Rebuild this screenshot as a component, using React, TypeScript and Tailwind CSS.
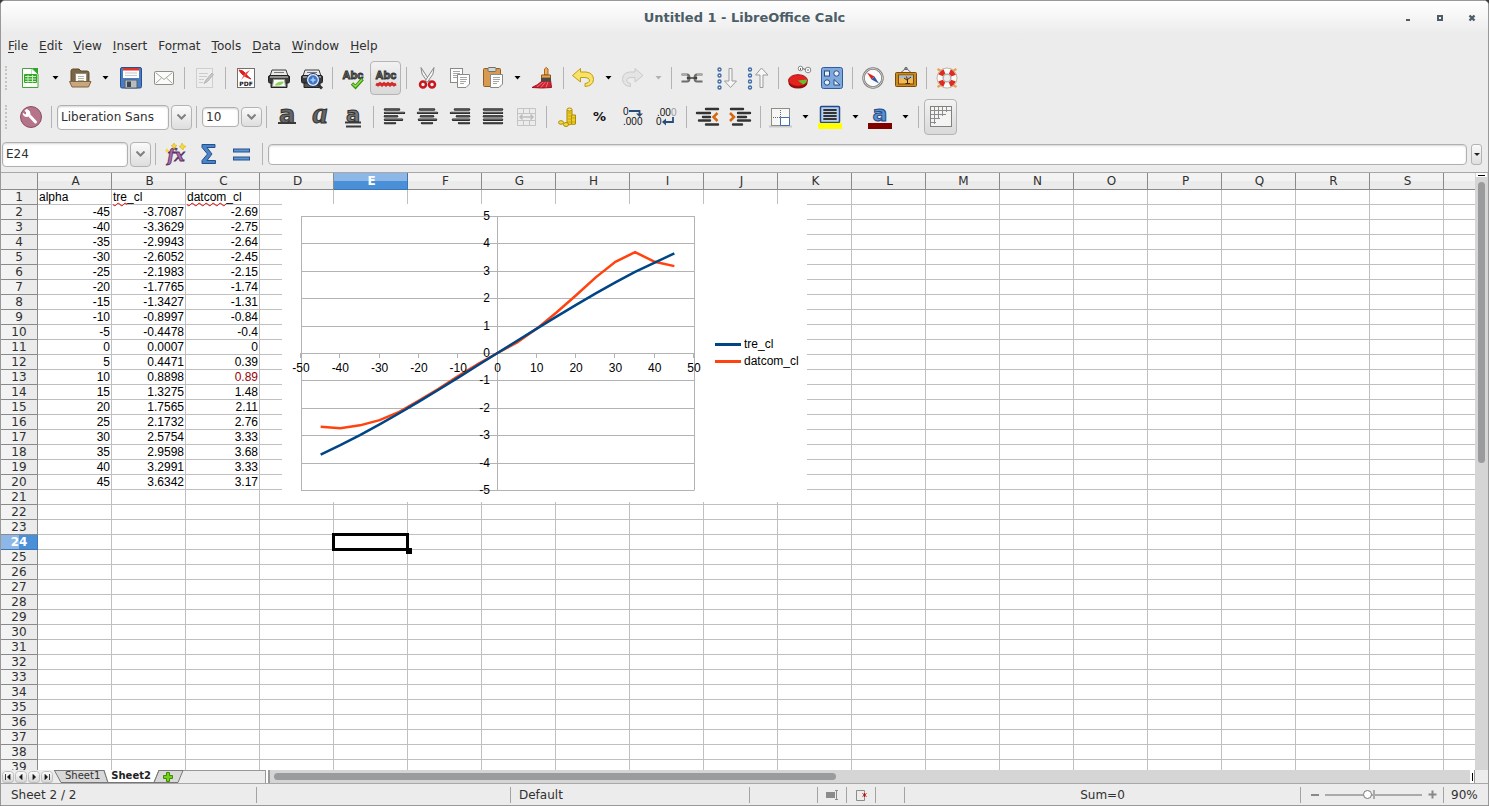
import React, { useState } from "react";
import clsx from "clsx";

const columns = "ABCDEFGHIJKLMNOPQRST".split("");
const rowCount = 39;

const alpha = [-45, -40, -35, -30, -25, -20, -15, -10, -5, 0, 5, 10, 15, 20, 25, 30, 35, 40, 45];
const treCl = [
  -3.7087, -3.3629, -2.9943, -2.6052, -2.1983, -1.7765, -1.3427, -0.8997, -0.4478, 0.0007,
  0.4471, 0.8898, 1.3275, 1.7565, 2.1732, 2.5754, 2.9598, 3.2991, 3.6342,
];
const datcomCl = [
  -2.69, -2.75, -2.64, -2.45, -2.15, -1.74, -1.31, -0.84, -0.4, 0,
  0.39, 0.89, 1.48, 2.11, 2.76, 3.33, 3.68, 3.33, 3.17,
];

const Icon = ({ children }: { children: React.ReactNode }) => (
  <svg width="25" height="24" viewBox="0 0 25 24" fill="none" aria-hidden="true" className="block shrink-0 overflow-visible">
    {children}
  </svg>
);

/* ---------- standard toolbar icons ---------- */

const NewIcon = () => (
  <Icon>
    <path d="M4.5 2.5H14L20 8V21.5H4.5Z" fill="#fff" stroke="#3fa535" />
    <path d="M14 2H20V8Z" fill="#2fa52a" />
    <path d="M13.5 3V8.5H19" stroke="#bfe3bb" />
    <rect x="6" y="8" width="13" height="9" rx="1" fill="#37a52c" />
    <path d="M7 10.5H18M7 13H18M7 15.5H18M10 9V16.500M14.500 9V16.500" stroke="#c9efc2" />
  </Icon>
);

const OpenIcon = () => (
  <Icon>
    <path d="M3 5Q3 3 5 3H11L13 5H19Q21 5 21 7V18H3Z" fill="#7d6444" stroke="#5e4a31" />
    <path d="M7.500 7.500H18.500V18H7.500Z" fill="#fafaf7" stroke="#8b8b80" />
    <path d="M10 10.500H16M10 12.500H16M10 14.500H16" stroke="#b5b5ac" />
    <path d="M1.500 15.500H23L20.500 21H4Z" fill="#c9a77b" stroke="#7d6444" />
  </Icon>
);

const SaveIcon = () => (
  <Icon>
    <rect x="2.500" y="1.500" width="21" height="20.500" rx="1.500" fill="#4a7cc4" stroke="#27508f" />
    <rect x="5" y="2" width="16" height="10" fill="#fdfdfd" />
    <rect x="5" y="2" width="16" height="2.500" fill="#e0352b" />
    <path d="M7 7H19M7 9.500H19" stroke="#c2c7d0" />
    <rect x="7" y="14" width="12" height="8" fill="#b9bdc0" stroke="#54606e" />
    <rect x="9" y="15.500" width="4" height="5.500" fill="#3c4653" />
  </Icon>
);

const MailIcon = () => (
  <Icon>
    <rect x="3.500" y="5.500" width="19" height="13" rx="1" fill="#fbfbfa" stroke="#8f8f8a" />
    <path d="M4.500 6.500L13 13.500L21.500 6.500M4.500 17.500L10.500 12M21.500 17.500L15.500 12" stroke="#a3a39d" />
  </Icon>
);

const EditFileIcon = () => (
  <Icon>
    <rect x="4.500" y="2.500" width="16" height="19" fill="#eeeeee" stroke="#cfcfcf" />
    <path d="M7 7.500H16M7 10.500H15M7 13.500H12M7 16.500H11" stroke="#cccccc" />
    <path d="M20 7L14 14L12 17.500L15.500 15.500L21.500 8.500Z" fill="#c7c7c7" stroke="#b5b5b5" />
  </Icon>
);

const PdfIcon = () => (
  <Icon>
    <rect x="4.500" y="2.500" width="17" height="19" fill="#fff" stroke="#707070" />
    <path d="M6 4Q10 4 13 8Q14 10 18 13Q12 11 9 8Q7 6 6 4Z" fill="#e01d1d" stroke="#e01d1d" />
    <path d="M17 4L14 8L8 14Q11 9 12 7Z" fill="#ef4a4a" />
    <text x="13" y="20" textAnchor="middle" fontFamily="DejaVu Sans" fontSize="6" fontWeight="bold" fill="#111">
      PDF
    </text>
  </Icon>
);

const PrinterShape = () => (
  <>
    <path d="M6 4H20L22 10H4Z" fill="#e9e9e9" stroke="#3d3d3d" />
    <path d="M8 6.500H18" stroke="#777" />
    <rect x="2.500" y="9.500" width="21" height="7.500" rx="1.500" fill="#3b3b39" stroke="#222" />
    <rect x="4" y="10" width="18" height="2" fill="#8f8f8c" />
    <path d="M5 17H21V21.500H5Z" fill="#55554f" stroke="#222" />
  </>
);

const PrintIcon = () => (
  <Icon>
    <PrinterShape />
    <path d="M7.500 13.500H18.500L19.500 20.500H6.500Z" fill="#f9fff4" stroke="#9a9a9a" />
    <path d="M8.500 19.500Q11 15 17.500 15.500Q18 18 13 19.500Z" fill="#8fd05f" />
  </Icon>
);

const PreviewIcon = () => (
  <Icon>
    <PrinterShape />
    <path d="M17 17L23 22.500" stroke="#333" strokeWidth="3" />
    <circle cx="14" cy="14" r="5.500" fill="#3d74c9" stroke="#e8eef6" strokeWidth="1.500" />
    <circle cx="14" cy="14" r="6.500" stroke="#1d3c78" />
    <path d="M11.500 14H16.500M14 11.500V16.500" stroke="#b3d1f7" strokeWidth="1.500" />
  </Icon>
);

const AbcText = () => (
  <text
    x="13"
    y="13"
    textAnchor="middle"
    fontFamily="Liberation Sans"
    fontSize="11"
    fontWeight="bold"
    fill="#8a8a8a"
    stroke="#2e2e2e"
    strokeWidth="0.900"
  >
    Abc
  </text>
);

const SpellIcon = () => (
  <Icon>
    <AbcText />
    <path d="M12 17.500L15.500 21L22.500 13" stroke="#3c8f12" strokeWidth="3.500" />
    <path d="M12.500 18L15.500 20.500L22 13.500" stroke="#8ee04a" strokeWidth="1.500" />
  </Icon>
);

const AutoSpellIcon = () => (
  <Icon>
    <AbcText />
    <path
      d="M3 18L5 19L7 17.500L9 19L11 17.500L13 19L15 17.500L17 19L19 17.500L21 19L23 18"
      stroke="#d42a2a"
      strokeWidth="3"
    />
  </Icon>
);

const CutIcon = () => (
  <Icon>
    <path d="M7 1.500L8 8L13.500 16L15.500 14.500Z" fill="#f1f1f1" stroke="#8a8a88" />
    <path d="M20 1.500L19 8L13.500 16L11.500 14.500Z" fill="#f8f8f8" stroke="#8a8a88" />
    <circle cx="9" cy="18.500" r="3" stroke="#c8171e" strokeWidth="2.500" />
    <circle cx="18" cy="18.500" r="3" stroke="#c8171e" strokeWidth="2.500" />
  </Icon>
);

const CopyIcon = () => (
  <Icon>
    <rect x="3.500" y="2.500" width="12" height="14" fill="#fdfdfd" stroke="#888a85" />
    <path d="M6 5.500H13M6 7.500H13M6 9.500H12M6 11.500H10" stroke="#a5a7a2" />
    <path d="M10.500 8.500H22.500V18L19 21.500H10.500Z" fill="#fdfdfd" stroke="#888a85" />
    <path d="M13 11.500H20M13 13.500H20M13 15.500H19M13 17.500H17" stroke="#a5a7a2" />
  </Icon>
);

const PasteIcon = () => (
  <Icon>
    <rect x="3.500" y="2.500" width="17" height="18" rx="1" fill="#d79a50" stroke="#8f5d1e" />
    <rect x="8" y="1.500" width="8" height="4" rx="1" fill="#d5d7d2" stroke="#6f716c" />
    <path d="M10.500 8.500H22.500V18L19 21.500H10.500Z" fill="#fdfdfd" stroke="#888a85" />
    <path d="M13 11.500H20M13 13.500H20M13 15.500H19M13 17.500H17" stroke="#a5a7a2" />
  </Icon>
);

const BrushIcon = () => (
  <Icon>
    <path d="M12 15Q8 19 2 21.500Q12 22.500 21.500 21.500L20.500 14Z" fill="#cf2430" stroke="#9a1420" />
    <path d="M7 21L13 16M11 21.500L15.500 16M16 21.500L18 16" stroke="#ef7078" />
    <path d="M14.500 3Q16 0 18 3V9H14.500Z" fill="#f1ad62" stroke="#a5661d" />
    <path d="M11.500 9H20.500V12H11.500Z" fill="#e2a458" stroke="#8d5715" />
    <rect x="11" y="12" width="10" height="3.500" fill="#4a4a45" />
  </Icon>
);

const UndoIcon = () => (
  <Icon>
    <path
      d="M1.500 9.500L9.500 2.500V6H15Q22.500 7 22.500 13.500Q22 20 14 20.500V17.500Q18.500 17 18.500 14Q18 11.500 14 11.500H9.500V16Z"
      fill="#f8e268"
      stroke="#c09c10"
    />
  </Icon>
);

const RedoIcon = () => (
  <Icon>
    <path
      d="M22 9.500L14 2.500V6H8.500Q1.500 7 1.500 13.500Q2 20 9.500 20.500V17.500Q5.500 17 5.500 14Q6 11.500 10 11.500H14V16Z"
      fill="#e4e4e4"
      stroke="#cacaca"
    />
  </Icon>
);

const LinkIcon = () => (
  <Icon>
    <path d="M2.500 8.500H8Q10.500 8.500 10.500 12Q10.500 15.500 8 15.500H2.500" stroke="#6b6d68" strokeWidth="2" />
    <path d="M23.500 8.500H18Q15.500 8.500 15.500 12Q15.500 15.500 18 15.500H23.500" stroke="#6b6d68" strokeWidth="2" />
    <path d="M3 8.500H8M18 8.500H23" stroke="#b9bbb6" strokeWidth="0.800" />
    <path d="M8 11L10 12H16L18 11M8 13L10 12M18 13L16 12" stroke="#3f413d" strokeWidth="1.500" />
  </Icon>
);

const SortDescIcon = () => (
  <Icon>
    {[3.5, 9.5, 15.5, 21.5].map((y) => (
      <circle key={y} cx="7.500" cy={y} r="1.500" fill="#fff" stroke="#3f6ca8" strokeWidth="1.400" />
    ))}
    <path d="M17 2.500H20V15H24.500L18.500 21.500L12.500 15H17Z" fill="#f6f6f6" stroke="#9b9b9b" />
  </Icon>
);

const SortAscIcon = () => (
  <Icon>
    {[3.5, 9.5, 15.5, 21.5].map((y) => (
      <circle key={y} cx="5" cy={y} r="1.500" fill="#fff" stroke="#3f6ca8" strokeWidth="1.400" />
    ))}
    <path d="M15 21.500H18V9H23L16.500 2L10.500 9H15Z" fill="#f6f6f6" stroke="#9b9b9b" />
  </Icon>
);

const ChartIcon = () => (
  <Icon>
    <ellipse cx="12" cy="17" rx="9.500" ry="5.500" fill="#8f0d0d" />
    <ellipse cx="12" cy="14.500" rx="9.500" ry="5.800" fill="#e3231f" stroke="#a81010" />
    <path d="M12 14.500L21 13.500Q21 17 17 18.500Z" fill="#63c12e" />
    <circle cx="14.500" cy="2.500" r="2.300" fill="#fff" stroke="#888" />
    <circle cx="22" cy="4" r="2.800" fill="#fff" stroke="#888" />
    <path d="M16.500 2.500L19.500 3.500M14.500 2V4M22 3V5" stroke="#666" />
  </Icon>
);

const DrawIcon = () => (
  <Icon>
    <rect x="2.500" y="1.500" width="21" height="21" rx="2" fill="#7fa9dd" stroke="#2f5c9c" />
    <rect x="5.500" y="5" width="5" height="5" fill="#e9f1fb" stroke="#234a82" />
    <circle cx="17.500" cy="7.500" r="2.700" fill="#e9f1fb" stroke="#234a82" />
    <circle cx="8" cy="16.500" r="2.700" fill="#e9f1fb" stroke="#234a82" />
    <path d="M15 13.500V19H21Z" fill="#e9f1fb" stroke="#234a82" />
  </Icon>
);

const NavigatorIcon = () => (
  <Icon>
    <circle cx="13" cy="12" r="9.500" fill="#fbfbfb" stroke="#7b7b7b" strokeWidth="2.500" />
    <circle cx="13" cy="12" r="9.500" stroke="#d0d0cc" />
    <path d="M7 6.500L14.500 10.500L11.500 13.500Z" fill="#d8261e" />
    <path d="M19 17.500L14.500 10.500L11.500 13.500Z" fill="#2c5aa8" />
  </Icon>
);

const GalleryIcon = () => (
  <Icon>
    <path d="M8 6.500L13 2L18 6.500" stroke="#666" />
    <circle cx="13" cy="2.500" r="1.200" fill="#999" stroke="#666" />
    <rect x="2.500" y="6.500" width="21" height="14" rx="1" fill="#c98a24" stroke="#7c4c06" />
    <rect x="5.500" y="9" width="15" height="9" fill="#f7b850" stroke="#7c4c06" />
    <path d="M6 9.500H20V12.500H6Z" fill="#a9bccb" />
    <path d="M14.500 17.500V13M14.500 14.500L11 12M14.500 13.500L18 11M14.500 14L13.500 10.500M12.500 17.500H17" stroke="#3a2a12" />
  </Icon>
);

const HelpIcon = () => (
  <Icon>
    <path d="M3.500 3L7 5M22.500 3L19 5M3.500 21L7 19M22.500 21L19 19" stroke="#e8a64a" strokeWidth="2.500" />
    <circle cx="13" cy="12" r="10" stroke="#e8b56a" />
    <circle cx="13" cy="12" r="7" stroke="#b9b9b5" strokeWidth="6.500" />
    <circle cx="13" cy="12" r="7" stroke="#fafafa" strokeWidth="5" />
    <circle
      cx="13"
      cy="12"
      r="7"
      stroke="#e02b20"
      strokeWidth="5"
      strokeDasharray="5.500 5.500"
      transform="rotate(22 13 12)"
    />
    <circle cx="13" cy="12" r="3.800" fill="#ededed" stroke="#a8a8a4" />
  </Icon>
);

/* ---------- formatting toolbar icons ---------- */

const StylesIcon = () => (
  <Icon>
    <circle cx="13" cy="12" r="10.500" fill="#b5748a" stroke="#8b4d63" />
    <path d="M9.500 8.500L17.500 17" stroke="#fff" strokeWidth="3" strokeLinecap="round" />
    <path d="M7 5.500L9 8L7.500 10L5 8.500Q5.500 12 9.500 11.500L12 9Q12 5.500 9 4.500Z" fill="#fff" stroke="#fff" />
  </Icon>
);

const BoldIcon = () => (
  <Icon>
    <text x="13" y="18" textAnchor="middle" fontFamily="DejaVu Sans" fontSize="24" fontWeight="bold" fill="#666" stroke="#2f2f2f">
      a
    </text>
    <path d="M4 18H22" stroke="#3a3a3a" strokeWidth="2" />
  </Icon>
);

const ItalicIcon = () => (
  <Icon>
    <text
      x="13"
      y="18"
      textAnchor="middle"
      fontFamily="Liberation Serif"
      fontSize="30"
      fontStyle="italic"
      fontWeight="bold"
      fill="#666"
      stroke="#2f2f2f"
    >
      a
    </text>
  </Icon>
);

const UnderlineIcon = () => (
  <Icon>
    <text x="13" y="17" textAnchor="middle" fontFamily="DejaVu Sans" fontSize="21" fontWeight="bold" fill="#777" stroke="#2f2f2f">
      a
    </text>
    <path d="M5 17.500H21M6 21.500H21" stroke="#3a3a3a" strokeWidth="2" />
  </Icon>
);

type Bar = [number, number];

const AlignIcon = ({ bars }: { bars: Bar[] }) => (
  <Icon>
    {bars.map(([from, to], i) => (
      <g key={i} strokeLinecap="round">
        <path d={`M${from} ${4.5 + i * 3.4}H${to}`} stroke="#2b2b2b" strokeWidth="2.400" />
        <path d={`M${from} ${4.2 + i * 3.4}H${to}`} stroke="#7b7b7b" strokeWidth="0.700" />
      </g>
    ))}
  </Icon>
);

const MergeIcon = () => (
  <Icon>
    <path d="M4.500 3.500H22.500V20.500H4.500ZM4.500 8.500H22.500M4.500 15.500H22.500M10.500 3.500V8.500M16.500 3.500V8.500M10.500 15.500V20.500M16.500 15.500V20.500" stroke="#c4c4c4" />
    <path d="M7 12H20M9.500 9.500L7 12L9.500 14.500M17.500 9.500L20 12L17.500 14.500" stroke="#bcbcbc" strokeWidth="1.500" />
  </Icon>
);

const CurrencyIcon = () => (
  <Icon>
    <path d="M13 5V19Q15 20.500 18 19V5Z" fill="#f0ce2a" stroke="#ab8a04" />
    <ellipse cx="15.500" cy="4.500" rx="2.500" ry="1.500" fill="#fbe983" stroke="#ab8a04" />
    <path d="M17.500 10V19Q19.500 20 21.500 19V10Z" fill="#f0ce2a" stroke="#ab8a04" />
    <path d="M13 8H18M13 11H18M13 14H18M13 17H21M18 13H21" stroke="#c7a512" />
    <ellipse cx="7" cy="17.500" rx="2.500" ry="1.800" fill="#f4d83f" stroke="#ab8a04" />
    <ellipse cx="12" cy="19.500" rx="2.500" ry="2" fill="#f4d83f" stroke="#ab8a04" />
  </Icon>
);

const PercentIcon = () => (
  <Icon>
    <text x="12.500" y="16" textAnchor="middle" fontFamily="DejaVu Sans" fontSize="13" fontWeight="bold" fill="#111">
      %
    </text>
  </Icon>
);

const AddDecimalIcon = () => (
  <Icon>
    <g fontFamily="Liberation Sans" fontSize="10" fill="#111">
      <text x="3" y="10">0</text>
      <text x="3" y="20">.000</text>
    </g>
    <path d="M9 6H19.500V9" stroke="#2a4d77" strokeWidth="1.800" />
    <path d="M16 8.500H23L19.500 12Z" fill="#2a4d77" />
  </Icon>
);

const DeleteDecimalIcon = () => (
  <Icon>
    <g fontFamily="Liberation Sans" fontSize="10" fill="#111">
      <text x="4" y="11">
        .00<tspan fill="#999">0</tspan>
      </text>
      <text x="3" y="20">0</text>
    </g>
    <path d="M20 12V17H12" stroke="#2a4d77" strokeWidth="1.800" />
    <path d="M13 13.500V20.500L9 17Z" fill="#2a4d77" />
  </Icon>
);

const IndentDecIcon = () => (
  <Icon>
    <path d="M12 4H24M3 8H16M9 12H16M5 15.500H16M12 19.500H24" stroke="#333" strokeWidth="2.400" strokeLinecap="round" />
    <path d="M23.500 8L19.500 12L23.500 16" stroke="#d3690f" strokeWidth="2.500" />
  </Icon>
);

const IndentIncIcon = () => (
  <Icon>
    <path d="M4 4H16M11 8H23M11 12H19M11 15.500H23M6 19.500H15" stroke="#333" strokeWidth="2.400" strokeLinecap="round" />
    <path d="M3 8L7 12L3 16" stroke="#d3690f" strokeWidth="2.500" />
  </Icon>
);

const BordersIcon = () => (
  <Icon>
    <path d="M1 21.500H24" stroke="#c9c9c9" strokeWidth="2" />
    <rect x="3.500" y="3.500" width="18" height="17" fill="#f7f8f5" stroke="#8b8d88" />
    <path d="M12.500 5V12M5 12.500H12" stroke="#666" strokeDasharray="1 1" />
    <path d="M12.500 20.500V12.500H21.500V20.500Z" fill="#fff" stroke="#3c6eb0" />
  </Icon>
);

const BackgroundIcon = () => (
  <Icon>
    <rect x="2.500" y="1.500" width="19" height="16" rx="1" fill="#b9d0ee" stroke="#234a86" strokeWidth="1.500" />
    <path d="M6 5H18M6 8H18M6 11H18M6 14H18" stroke="#333" strokeWidth="1.800" strokeLinecap="round" />
    <rect x="0" y="18" width="24" height="6" fill="#ffff00" />
  </Icon>
);

const FontColorIcon = () => (
  <Icon>
    <text x="12" y="16" textAnchor="middle" fontFamily="DejaVu Sans" fontSize="22" fontWeight="bold" fill="#5a8fd0" stroke="#234a86">
      a
    </text>
    <rect x="0" y="18" width="24" height="6" fill="#800000" />
  </Icon>
);

const GridIcon = () => (
  <Icon>
    <rect x="2.500" y="1.500" width="21" height="20" fill="#f4f4f2" stroke="#80827d" />
    <path d="M3 5.500H23M3 9.500H18M3 13.500H12M3 17.500H8M6.500 2V19M10.500 2V14M14.500 2V11M18.500 2V7" stroke="#8c8c8c" />
  </Icon>
);

/* ---------- formula bar icons ---------- */

const FunctionIcon = () => (
  <Icon>
    <text x="13" y="19" textAnchor="middle" fontFamily="DejaVu Serif" fontSize="17" fontStyle="italic" fontWeight="bold" fill="#a76ba6" stroke="#5c2f63" strokeWidth="0.800">
      fx
    </text>
    <path d="M11 1L12 3L14 3.500L12 5L11 7L10 5L8 3.500L10 3ZM19 1L20.500 3.500L23 4.500L20.500 6L20 8L18 6L16 4.500L18 3.500Z" fill="#f5d93a" stroke="#d7b40f" strokeWidth="0.600" />
    <path d="M4 6L5 8L7 8.500L5 9.500L4 11L3 9.500L2 8.500L3 8Z" fill="#f5d93a" />
  </Icon>
);

const SumIcon = () => (
  <Icon>
    <path d="M6 2.500H19V5.500H11L16 12L11 18.500H19.500V21.500H6V18.500L11.500 12L6 5.500Z" fill="#4b84c6" stroke="#24508d" />
  </Icon>
);

const EqualsIcon = () => (
  <Icon>
    <rect x="4.500" y="7" width="16" height="3" fill="#5d94d3" stroke="#24508d" />
    <rect x="4.500" y="15" width="16" height="3" fill="#5d94d3" stroke="#24508d" />
  </Icon>
);

/* ---------- controls ---------- */

const Tool = ({
  label,
  pressed,
  disabled,
  large,
  children,
}: {
  label: string;
  pressed?: boolean;
  disabled?: boolean;
  large?: boolean;
  children: React.ReactNode;
}) => (
  <button
    type="button"
    aria-label={label}
    aria-pressed={pressed}
    disabled={disabled}
    className={clsx("flex shrink-0 items-center justify-center", large ? "w-[37px]" : "w-[33px]")}
  >
    <span
      className={clsx(
        "flex items-center justify-center rounded-[4px] border",
        large ? "h-[36px] w-[33px]" : "h-[34px] w-[31px]",
        pressed ? "border-[#b4b4b4] bg-linear-to-b from-[#f2f2f2] to-[#d9d9d9]" : "border-transparent"
      )}
    >
      {children}
    </span>
  </button>
);

const DropArrow = ({ label, disabled }: { label: string; disabled?: boolean }) => (
  <button type="button" aria-label={label} disabled={disabled} className="flex w-[17px] shrink-0 justify-center">
    <svg width="7" height="4" viewBox="0 0 7 4" aria-hidden="true">
      <path d="M0.500 0H6.500L3.500 3.500Z" fill={disabled ? "#b0b0b0" : "#000"} />
    </svg>
  </button>
);

const Sep = () => (
  <span className="flex w-2 shrink-0 justify-center">
    <span className="h-[22px] w-px bg-[#b3b3b3]" />
  </span>
);

const Grip = () => <span className="mr-[7px] ml-1 h-6 w-[2px] shrink-0 border-l-2 border-dotted border-[#c4c4c4]" />;

const Chevron = ({ label, tall }: { label: string; tall?: boolean }) => (
  <button
    type="button"
    aria-label={label}
    className={clsx(
      "flex w-[21px] shrink-0 items-center justify-center rounded-[4px] border border-[#b3b3b3] bg-linear-to-b from-[#fafafa] to-[#dedede]",
      tall ? "h-[25px]" : "h-[20px]"
    )}
  >
    <svg width="9" height="6" viewBox="0 0 9 6" aria-hidden="true">
      <path d="M0.500 0.500L4.500 4.500L8.500 0.500" fill="none" stroke="#808080" strokeWidth="2" />
    </svg>
  </button>
);

const fieldClass =
  "appearance-none rounded-[4px] border border-[#b0b0b0] bg-white text-[12px] text-[#303030] shadow-[inset_0_1px_2px_#d5d5d5] outline-none";

/* ---------- chart ---------- */

const px = (a: number) => 215.5 + a * 3.93;
const py = (c: number) => 149 - c * 27.4;
const toPoints = (values: number[]) => values.map((v, i) => `${px(alpha[i])},${py(v)}`).join(" ");

const Chart = () => {
  const xTicks = [-50, -40, -30, -20, -10, 0, 10, 20, 30, 40, 50];
  const yTicks = [5, 4, 3, 2, 1, 0, -1, -2, -3, -4, -5];

  return (
    <svg
      width="525"
      height="298"
      viewBox="0 0 525 298"
      role="img"
      aria-label="tre_cl and datcom_cl against alpha"
      className="absolute top-[31px] left-[281px] bg-white"
      fontFamily="Liberation Sans, sans-serif"
      fontSize="12"
    >
      <g stroke="#b3b3b3" fill="none">
        {yTicks.map((t) => (
          <path key={t} d={`M19 ${Math.round(py(t)) + 0.5}H412.500`} />
        ))}
        <path d="M19.500 12V286M412.500 12V286M215.500 12V286" />
        {xTicks.map((t) => (
          <path key={t} d={`M${Math.round(px(t)) - 0.5} 149V154`} />
        ))}
      </g>
      <polyline points={toPoints(datcomCl)} fill="none" stroke="#ff420e" strokeWidth="2.500" />
      <polyline points={toPoints(treCl)} fill="none" stroke="#004586" strokeWidth="2.500" />
      <g fill="#000">
        {xTicks.map((t) => (
          <text key={t} x={px(t)} y="168" textAnchor="middle">
            {t}
          </text>
        ))}
        {yTicks.map((t) => (
          <text key={t} x="208" y={py(t) + 4} textAnchor="end">
            {t}
          </text>
        ))}
        <text x="462" y="144">tre_cl</text>
        <text x="462" y="161">datcom_cl</text>
      </g>
      <path d="M433 140.500H459" stroke="#004586" strokeWidth="3" />
      <path d="M433 157.500H459" stroke="#ff420e" strokeWidth="3" />
    </svg>
  );
};

/* ---------- sheet ---------- */

const Misspelt = ({ children }: { children: React.ReactNode }) => (
  <span className="underline decoration-[#e00000] decoration-wavy decoration-1 underline-offset-1 [text-decoration-skip-ink:none]">
    {children}
  </span>
);

const cellContent = (row: number, col: string): React.ReactNode => {
  if (row === 1) {
    if (col === "A") return "alpha";
    if (col === "B") return <><Misspelt>tre</Misspelt>_cl</>;
    if (col === "C") return <><Misspelt>datcom</Misspelt>_cl</>;
    return null;
  }
  const i = row - 2;
  if (i >= alpha.length) return null;
  if (col === "A") return alpha[i];
  if (col === "B") return treCl[i];
  if (col === "C") return datcomCl[i];
  return null;
};

const Sheet = () => (
  <div className="relative h-full min-w-0 flex-1 overflow-hidden bg-white">
    <table className="w-[1517px] table-fixed border-separate border-spacing-0 text-[12px] leading-[14px]">
      <colgroup>
        <col className="w-[37px]" />
        {columns.map((c) => (
          <col key={c} className="w-[74px]" />
        ))}
      </colgroup>
      <thead>
        <tr>
          <td className="h-[17px] border-r border-b border-[#8a8a8a] bg-[#ececec] p-0" />
          {columns.map((c) => (
            <th
              key={c}
              scope="col"
              className={clsx(
                "h-[17px] border-r border-b py-0 pr-0 pl-[2px] font-[DejaVu_Sans]",
                c === "E"
                  ? "border-[#3f74b3] bg-linear-to-b from-[#8cb7e7] from-50% to-[#4a90d9] to-50% font-bold text-white"
                  : "border-[#8a8a8a] bg-linear-to-b from-[#f3f3f3] from-50% to-[#ebebeb] to-50% font-normal text-[#303030]"
              )}
            >
              {c}
            </th>
          ))}
        </tr>
      </thead>
      <tbody>
        {Array.from({ length: rowCount }, (_, i) => i + 1).map((row) => (
          <tr key={row}>
            <th
              scope="row"
              className={clsx(
                "h-[15px] border-r border-b p-0 font-[DejaVu_Sans]",
                row === 24
                  ? "border-[#3f74b3] bg-linear-to-r from-[#8cb7e7] from-50% to-[#4a90d9] to-50% font-bold text-white"
                  : "border-[#8a8a8a] bg-linear-to-r from-[#f3f3f3] from-50% to-[#ebebeb] to-50% font-normal text-[#303030]"
              )}
            >
              {row}
            </th>
            {columns.map((c) => (
              <td
                key={c}
                className={clsx(
                  "h-[15px] border-r border-b border-[#c0c0c0] px-px py-0 font-[Liberation_Sans] whitespace-nowrap",
                  row === 1 ? "text-left" : "text-right",
                  row === 13 && c === "C" ? "text-[#9c0006]" : "text-black"
                )}
              >
                {cellContent(row, c)}
              </td>
            ))}
          </tr>
        ))}
      </tbody>
    </table>

    <Chart />

    {/* cell cursor on E24 */}
    <div className="absolute top-[360px] left-[331px] h-[18px] w-[77px] border-3 border-black">
      <span className="absolute -right-[6px] -bottom-[6px] size-[6px] bg-black" />
    </div>
  </div>
);

const menus = ["File", "Edit", "View", "Insert", "Format", "Tools", "Data", "Window", "Help"];
const accessKey: Record<string, number> = { Format: 2 };

const MenuBar = () => (
  <nav className="flex h-6 shrink-0 items-center gap-[11px] px-[7px]">
    {menus.map((m) => {
      const k = accessKey[m] ?? 0;
      return (
        <button key={m} type="button" className="leading-4">
          {m.slice(0, k)}
          <span className="underline underline-offset-2">{m[k]}</span>
          {m.slice(k + 1)}
        </button>
      );
    })}
  </nav>
);

const StandardToolbar = () => (
  <div role="toolbar" aria-label="Standard" className="flex h-10 shrink-0 items-center">
    <Grip />
    <Tool label="New"><NewIcon /></Tool>
    <DropArrow label="New options" />
    <Tool label="Open"><OpenIcon /></Tool>
    <DropArrow label="Recent files" />
    <Tool label="Save"><SaveIcon /></Tool>
    <Tool label="Document as E-mail"><MailIcon /></Tool>
    <Sep />
    <Tool label="Edit File" disabled><EditFileIcon /></Tool>
    <Sep />
    <Tool label="Export as PDF"><PdfIcon /></Tool>
    <Tool label="Print"><PrintIcon /></Tool>
    <Tool label="Page Preview"><PreviewIcon /></Tool>
    <Sep />
    <Tool label="Spelling"><SpellIcon /></Tool>
    <Tool label="AutoSpellcheck" pressed><AutoSpellIcon /></Tool>
    <Sep />
    <Tool label="Cut"><CutIcon /></Tool>
    <Tool label="Copy"><CopyIcon /></Tool>
    <Tool label="Paste"><PasteIcon /></Tool>
    <DropArrow label="Paste options" />
    <Tool label="Clone Formatting"><BrushIcon /></Tool>
    <Sep />
    <Tool label="Undo"><UndoIcon /></Tool>
    <DropArrow label="Undo history" />
    <Tool label="Redo" disabled><RedoIcon /></Tool>
    <DropArrow label="Redo history" disabled />
    <Sep />
    <Tool label="Hyperlink"><LinkIcon /></Tool>
    <Tool label="Sort Ascending"><SortDescIcon /></Tool>
    <Tool label="Sort Descending"><SortAscIcon /></Tool>
    <Sep />
    <Tool label="Chart"><ChartIcon /></Tool>
    <Tool label="Show Draw Functions"><DrawIcon /></Tool>
    <Sep />
    <Tool label="Navigator"><NavigatorIcon /></Tool>
    <Tool label="Gallery"><GalleryIcon /></Tool>
    <Sep />
    <Tool label="Help"><HelpIcon /></Tool>
  </div>
);

const FormattingToolbar = () => (
  <div role="toolbar" aria-label="Formatting" className="flex h-[38px] shrink-0 items-center">
    <Grip />
    <Tool label="Styles and Formatting"><StylesIcon /></Tool>
    <Sep />
    <div className="flex items-center gap-[2px] pl-[2px]">
      <select aria-label="Font Name" className={clsx(fieldClass, "h-[25px] w-[112px] pl-[3px]")}>
        <option>Liberation Sans</option>
      </select>
      <Chevron label="Choose font" tall />
    </div>
    <Sep />
    <div className="flex items-center gap-[2px] pl-[2px]">
      <select aria-label="Font Size" className={clsx(fieldClass, "h-[20px] w-[37px] pl-[3px]")}>
        <option>10</option>
      </select>
      <Chevron label="Choose size" />
    </div>
    <Sep />
    <Tool label="Bold"><BoldIcon /></Tool>
    <Tool label="Italic"><ItalicIcon /></Tool>
    <Tool label="Underline"><UnderlineIcon /></Tool>
    <Sep />
    <Tool label="Align Left"><AlignIcon bars={[[4, 18], [4, 23], [4, 16], [4, 21], [4, 14]]} /></Tool>
    <Tool label="Center Horizontally"><AlignIcon bars={[[6, 20], [4, 23], [7, 19], [5, 22], [8, 18]]} /></Tool>
    <Tool label="Align Right"><AlignIcon bars={[[8, 22], [4, 22], [10, 22], [6, 22], [12, 22]]} /></Tool>
    <Tool label="Justified"><AlignIcon bars={[[4, 22], [4, 22], [4, 22], [4, 22], [4, 22]]} /></Tool>
    <Tool label="Merge Cells" disabled><MergeIcon /></Tool>
    <Sep />
    <Tool label="Currency"><CurrencyIcon /></Tool>
    <Tool label="Percent"><PercentIcon /></Tool>
    <Tool label="Add Decimal Place"><AddDecimalIcon /></Tool>
    <Tool label="Delete Decimal Place"><DeleteDecimalIcon /></Tool>
    <Sep />
    <Tool label="Decrease Indent"><IndentDecIcon /></Tool>
    <Tool label="Increase Indent"><IndentIncIcon /></Tool>
    <Sep />
    <Tool label="Borders"><BordersIcon /></Tool>
    <DropArrow label="Border style" />
    <Tool label="Background Color"><BackgroundIcon /></Tool>
    <DropArrow label="Choose background" />
    <Tool label="Font Color"><FontColorIcon /></Tool>
    <DropArrow label="Choose font color" />
    <Sep />
    <Tool label="Grid Lines" pressed large><GridIcon /></Tool>
  </div>
);

const FormulaBar = () => {
  const [cell, setCell] = useState("E24");
  const [formula, setFormula] = useState("");

  return (
    <div className="flex h-9 shrink-0 items-center gap-[2px] pl-px">
      <input
        aria-label="Name Box"
        value={cell}
        onChange={(e) => setCell(e.target.value)}
        className={clsx(fieldClass, "h-[25px] w-[126px] pl-[3px]")}
      />
      <Chevron label="Named ranges" tall />
      <div className="-mx-[2px] flex items-center">
        <Sep />
        <Tool label="Function Wizard"><FunctionIcon /></Tool>
        <Tool label="Sum"><SumIcon /></Tool>
        <Tool label="Function"><EqualsIcon /></Tool>
        <Sep />
      </div>
      <input
        aria-label="Input line"
        value={formula}
        onChange={(e) => setFormula(e.target.value)}
        className={clsx(fieldClass, "ml-[2px] h-[21px] min-w-0 flex-1 px-1")}
      />
      <button
        type="button"
        aria-label="Expand Formula Bar"
        className="mr-[6px] ml-[2px] flex h-[21px] w-[11px] items-center justify-center rounded-[3px] border border-[#b3b3b3] bg-linear-to-b from-[#fafafa] to-[#dedede]"
      >
        <svg width="6" height="3" viewBox="0 0 6 3" aria-hidden="true">
          <path d="M0 0H6L3 3Z" fill="#222" />
        </svg>
      </button>
    </div>
  );
};

const navPaths = [
  { label: "First sheet", d: "M3.500 3V9M8 3.500L5.500 6L8 8.500Z" },
  { label: "Previous sheet", d: "M7 3.500L4.500 6L7 8.500Z" },
  { label: "Next sheet", d: "M5 3.500L7.500 6L5 8.500Z" },
  { label: "Last sheet", d: "M8.500 3V9M4 3.500L6.500 6L4 8.500Z" },
];

const SheetTabs = () => (
  <div className="flex h-[13px] shrink-0 bg-[#ececec]">
    <div className="flex w-[53px] shrink-0 items-center gap-px pl-px">
      {navPaths.map((n) => (
        <button key={n.label} type="button" aria-label={n.label} className="rounded-[3px] bg-linear-to-b from-white to-[#d4d4d4]">
          <svg width="12" height="12" viewBox="0 0 12 12" aria-hidden="true" className="block">
            <rect x="0.500" y="0.500" width="11" height="11" rx="3" fill="none" stroke="#bdbdbd" />
            <path d={n.d} fill="#111" stroke="#111" strokeWidth="0.800" />
          </svg>
        </button>
      ))}
    </div>
    <div className="relative flex w-[211px] shrink-0 items-start text-[10px] leading-[11px]">
      <svg width="211" height="13" viewBox="0 0 211 13" aria-hidden="true" className="absolute inset-0">
        <path d="M0 0.500H211" stroke="#999" />
        <path d="M0.500 0.500H50L54 12.500H7Z" fill="#d8d8d8" stroke="#777" />
        <path d="M50 0L54 12.500H100L105 0Z" fill="#fff" />
        <path d="M50 0L54 12.500H100L105 0" fill="none" stroke="#777" />
        <path d="M105 0.500H129L124 12.500H100Z" fill="#d8d8d8" stroke="#777" />
        <path d="M109.500 5.500H112.500V2.500H115.500V5.500H118.500V8.500H115.500V11.500H112.500V8.500H109.500Z" fill="#73d216" stroke="#3f8a06" />
      </svg>
      <button type="button" className="relative ml-[11px]">Sheet1</button>
      <button type="button" aria-current="true" className="relative ml-[11px] font-bold text-[#222]">Sheet2</button>
      <button type="button" aria-label="Add sheet" className="relative ml-[9px] h-[13px] w-4" />
    </div>
    <div className="flex min-w-0 flex-1 bg-[#d5d5d5]">
      <span className="h-[13px] w-[5px] border-r-2 border-l border-[#9a9a9a] bg-white" />
      <div className="flex flex-1 items-center pl-1">
        <span className="h-[7px] w-[47%] rounded-full bg-[#9a9b9c]" />
      </div>
      <span className="flex h-[13px] w-[5px] items-center justify-center border-r border-[#9a9a9a] bg-white">
        <span className="h-2 w-px bg-black" />
      </span>
      <span className="w-[13px] bg-[#ececec]" />
    </div>
  </div>
);

const StatusSep = () => <span className="h-4 w-px shrink-0 bg-[#a3a3a3]" />;

const StatusBar = () => {
  const [zoom, setZoom] = useState(43);

  return (
    <footer className="flex h-[22px] shrink-0 items-center border-t border-[#a8a8a8]">
      <span className="w-[255px] shrink-0 pl-[10px]">Sheet 2 / 2</span>
      <StatusSep />
      <span className="w-[253px] shrink-0" />
      <StatusSep />
      <span className="w-[238px] shrink-0 pl-2">Default</span>
      <StatusSep />
      <span className="w-[67px] shrink-0" />
      <StatusSep />
      <span className="flex w-7 shrink-0 justify-center">
        <svg width="14" height="12" viewBox="0 0 14 12" aria-hidden="true">
          <rect x="1" y="3" width="9" height="6" fill="#8b8b8b" />
          <path d="M10 1.500H13M10 10.500H13M11.500 1.500V10.500" stroke="#8b8b8b" />
        </svg>
      </span>
      <StatusSep />
      <span className="flex w-7 shrink-0 justify-center">
        <svg width="14" height="12" viewBox="0 0 14 12" aria-hidden="true">
          <path d="M10.500 3V1.500H2.500V11.500H10.500V9" fill="none" stroke="#8b8b8b" />
          <path d="M10.500 3.500V8.500M8.500 4.500L12.500 7.500M12.500 4.500L8.500 7.500" stroke="#b01818" />
        </svg>
      </span>
      <StatusSep />
      <span className="w-7 shrink-0" />
      <StatusSep />
      <span className="flex-1 text-center">Sum=0</span>
      <StatusSep />
      <div className="flex w-[142px] shrink-0 items-center justify-center gap-[6px] pl-1">
        <button type="button" aria-label="Zoom Out" className="h-[2px] w-2 bg-[#888]" />
        <input
          type="range"
          aria-label="Zoom"
          value={zoom}
          onChange={(e) => setZoom(Number(e.target.value))}
          className="h-[9px] w-[97px] appearance-none bg-[linear-gradient(#aaa,#aaa),linear-gradient(#aaa,#aaa)] bg-[length:100%_2px,2px_9px] bg-center bg-no-repeat outline-none [&::-webkit-slider-thumb]:size-[9px] [&::-webkit-slider-thumb]:appearance-none [&::-webkit-slider-thumb]:rounded-full [&::-webkit-slider-thumb]:border [&::-webkit-slider-thumb]:border-[#777] [&::-webkit-slider-thumb]:bg-white"
        />
        <button type="button" aria-label="Zoom In">
          <svg width="9" height="9" viewBox="0 0 9 9" aria-hidden="true" className="block">
            <path d="M0.500 4.500H8.500M4.500 0.500V8.500" stroke="#888" strokeWidth="2" />
          </svg>
        </button>
      </div>
      <StatusSep />
      <span className="w-11 shrink-0 pl-[7px]">90%</span>
    </footer>
  );
};

const TitleBar = () => (
  <header className="grid h-[33px] shrink-0 grid-cols-[1fr_auto_1fr] items-center bg-linear-to-b from-white to-[#ececec] text-[#4b5d67]">
    <span />
    <h1 className="text-[13px] leading-4 font-bold">Untitled 1 - LibreOffice Calc</h1>
    <div className="flex justify-end gap-[22px] pr-[11px]">
      <button type="button" aria-label="Minimize">
        <svg width="10" height="8" viewBox="0 0 10 8" aria-hidden="true">
          <path d="M3 6H7" stroke="currentColor" strokeWidth="2" />
        </svg>
      </button>
      <button type="button" aria-label="Maximize">
        <svg width="10" height="8" viewBox="0 0 10 8" aria-hidden="true">
          <rect x="3" y="2" width="4" height="4" fill="none" stroke="currentColor" strokeWidth="2" />
        </svg>
      </button>
      <button type="button" aria-label="Close">
        <svg width="10" height="8" viewBox="0 0 10 8" aria-hidden="true">
          <path d="M2.500 1.500L7.500 6.500M7.500 1.500L2.500 6.500" stroke="currentColor" strokeWidth="2.400" />
        </svg>
      </button>
    </div>
  </header>
);

const App = () => {
  return (
    <div className="h-screen bg-[#3a3a3a]">
      <div className="flex h-full flex-col overflow-hidden rounded-t-[5px] border border-[#999] bg-[#ececec] font-['DejaVu_Sans',sans-serif] text-[12px] text-[#303030]">
        <TitleBar />
        <MenuBar />
        <StandardToolbar />
        <FormattingToolbar />
        <FormulaBar />
        <main className="flex min-h-0 flex-1 border-t border-[#a8a8a8]">
          <Sheet />
          <div className="flex w-[13px] shrink-0 flex-col items-center bg-[#d5d5d5]">
            <span className="flex h-1 w-[11px] items-center justify-center bg-white">
              <span className="h-px w-[7px] bg-black" />
            </span>
            <span className="mt-[5px] h-[281px] w-[7px] rounded-full bg-[#9a9b9c]" />
          </div>
        </main>
        <SheetTabs />
        <StatusBar />
      </div>
    </div>
  );
};

export default App;
